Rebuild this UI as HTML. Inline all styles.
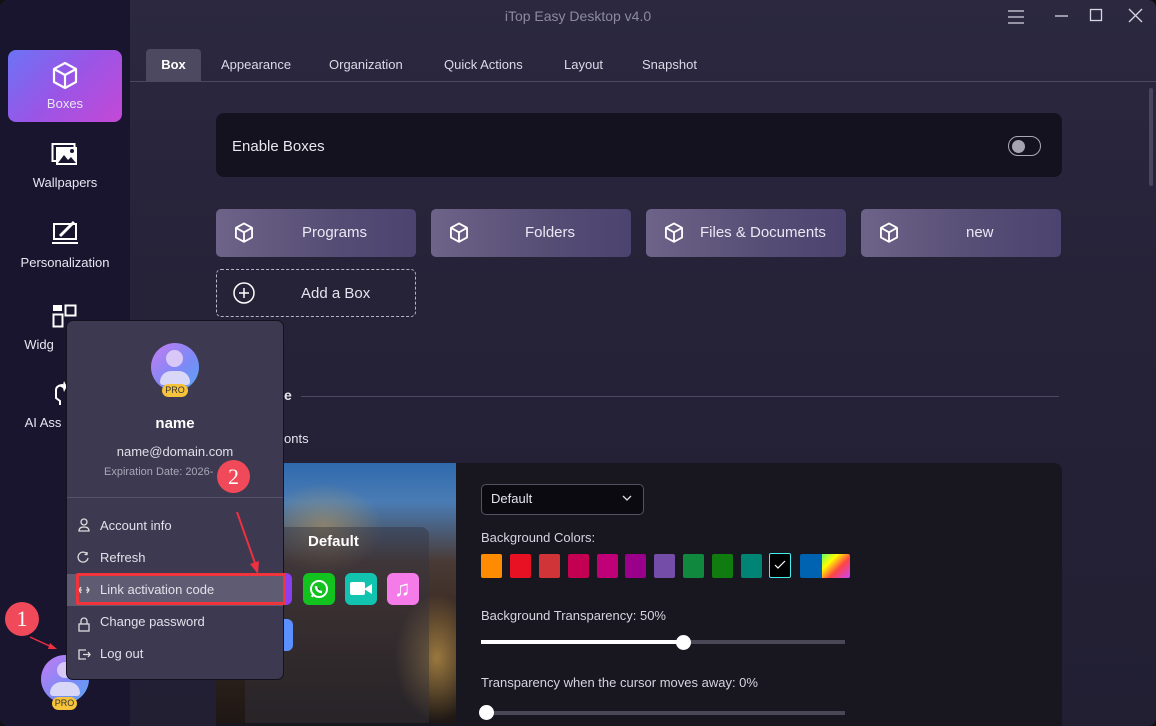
<!DOCTYPE html>
<html><head><meta charset="utf-8"><style>
*{box-sizing:border-box;margin:0;padding:0}
body{width:1156px;height:726px;overflow:hidden;background:#111;font-family:"Liberation Sans",sans-serif;color:#e6e4ee;position:relative}
.win{position:absolute;left:0;top:0;width:1156px;height:726px;border-radius:8px;overflow:hidden;background:linear-gradient(180deg,#2b2840 0%,#262238 40%,#221f33 100%)}
.side{position:absolute;left:0;top:0;width:130px;height:726px;background:#19152f}
.abs{position:absolute}
.nav{position:absolute;left:8px;width:114px;text-align:center;font-size:13px;color:#e8e6f0}
.tab{position:absolute;top:49px;height:32px;line-height:32px;font-size:13px;color:#dcdae6}
.btn{position:absolute;top:209px;width:200px;height:48px;border-radius:5px;background:linear-gradient(90deg,#6e6389,#554d74 60%,#4c4470);font-size:15px;color:#ebe8f4;line-height:48px}
.btn svg{position:absolute;left:17px;top:13px}
.sw{position:absolute;top:554px;width:21px;height:24px;border-radius:2px}
.menu div{position:absolute;left:0;width:218px;height:32px;line-height:32px;padding-left:34px;font-size:13px;color:#e2e0ea}
</style></head><body>
<div class="win">
<div class="side"></div>
<div class="abs" style="left:0;width:1156px;top:8px;text-align:center;font-size:14px;color:#8d8aa0">iTop Easy Desktop v4.0</div>
<svg class="abs" style="left:1005px;top:7px" width="22" height="20"><path d="M3 4h16M3 10h16M3 16h16" stroke="#d8d6e2" stroke-width="1.3"/></svg>
<svg class="abs" style="left:1052px;top:7px" width="22" height="20"><path d="M3 9h13" stroke="#d8d6e2" stroke-width="1.3"/></svg>
<svg class="abs" style="left:1088px;top:7px" width="18" height="18"><rect x="2.5" y="2.5" width="11" height="11" fill="none" stroke="#d8d6e2" stroke-width="1.3"/></svg>
<svg class="abs" style="left:1127px;top:7px" width="18" height="18"><path d="M2 2l13 13M15 2L2 15" stroke="#d8d6e2" stroke-width="1.3"/></svg>
<div class="abs" style="left:8px;top:50px;width:114px;height:72px;border-radius:8px;background:linear-gradient(135deg,#6c73f5,#9a55e6 50%,#c548d6)"></div>
<svg class="abs" style="left:51px;top:61px" width="28" height="30" viewBox="0 0 28 30"><path d="M14 2L25 8v13L14 27 3 21V8z M3 8l11 6 11-6 M14 14v13" fill="none" stroke="#fff" stroke-width="2.2" stroke-linejoin="round"/></svg>
<div class="nav" style="top:96px">Boxes</div>
<svg class="abs" style="left:51px;top:141px" width="28" height="26"><rect x="1.5" y="3" width="22" height="17" fill="none" stroke="#fff" stroke-width="2"/><rect x="5" y="6" width="21" height="18" fill="#fff"/><path d="M7 22l6-8 4 5 3-3 5 6z" fill="#19152f"/><circle cx="21" cy="10" r="2" fill="#19152f"/></svg>
<div class="nav" style="top:175px">Wallpapers</div>
<svg class="abs" style="left:51px;top:220px" width="28" height="26"><rect x="3" y="4" width="22" height="15" fill="none" stroke="#fff" stroke-width="2"/><path d="M1 23h26" stroke="#fff" stroke-width="2"/><path d="M9 16l14-14" stroke="#fff" stroke-width="3"/></svg>
<div class="nav" style="top:255px">Personalization</div>
<svg class="abs" style="left:52px;top:304px" width="26" height="26"><rect x="1" y="1" width="9" height="6" fill="#fff"/><rect x="13.5" y="1.5" width="10" height="10" fill="none" stroke="#fff" stroke-width="2"/><rect x="1.5" y="10.5" width="9" height="12" fill="none" stroke="#fff" stroke-width="2"/></svg>
<div class="nav" style="top:337px;left:-18px">Widg</div>
<svg class="abs" style="left:52px;top:380px" width="24" height="28"><path d="M4 10c0-3 3-5 7-5M4 10v8l4 3v4" fill="none" stroke="#fff" stroke-width="2"/><path d="M12 1l2 4 4 1-4 2-2 4-1-4-4-2 4-1z" fill="#fff"/></svg>
<div class="nav" style="top:415px;left:-14px">AI Ass</div>
<div class="abs" style="left:41px;top:655px;width:48px;height:48px;border-radius:50%;background:linear-gradient(135deg,#c57cf2,#7a8af6 60%,#5aa7f5)"></div>
<div class="abs" style="left:57px;top:662px;width:16px;height:16px;border-radius:50%;background:#d9c8f7"></div>
<div class="abs" style="left:50px;top:682px;width:30px;height:14px;border-radius:15px 15px 4px 4px;background:#d9d7f8"></div>
<div class="abs" style="left:52px;top:697px;width:25px;height:13px;border-radius:7px;background:#f6c33a;color:#333;font-size:9px;text-align:center;line-height:13px">PRO</div>
<div class="abs" style="left:130px;top:81px;width:1026px;height:1px;background:#4b4761"></div>
<div class="tab" style="left:146px;width:55px;background:#4d4961;border-radius:4px 4px 0 0;text-align:center;font-weight:bold;color:#fff">Box</div>
<div class="tab" style="left:221px">Appearance</div>
<div class="tab" style="left:329px">Organization</div>
<div class="tab" style="left:444px">Quick Actions</div>
<div class="tab" style="left:564px">Layout</div>
<div class="tab" style="left:642px">Snapshot</div>
<div class="abs" style="left:1149px;top:88px;width:4px;height:98px;border-radius:2px;background:#4a465c"></div>
<div class="abs" style="left:216px;top:113px;width:846px;height:64px;border-radius:8px;background:#15121f"></div>
<div class="abs" style="left:232px;top:138px;font-size:15px;color:#e8e6ee">Enable Boxes</div>
<div class="abs" style="left:1008px;top:136px;width:33px;height:20px;border-radius:10px;border:1.3px solid #aaa8b6"></div>
<div class="abs" style="left:1012px;top:140px;width:13px;height:13px;border-radius:50%;background:#a6a4b0"></div>
<div class="btn" style="left:216px"><svg width="22" height="22" viewBox="0 0 28 30"><path d="M14 2L25 8v13L14 27 3 21V8z M3 8l11 6 11-6 M14 14v13" fill="none" stroke="#fff" stroke-width="2.5" stroke-linejoin="round"/></svg><span class="abs" style="left:86px">Programs</span></div>
<div class="btn" style="left:431px"><svg width="22" height="22" viewBox="0 0 28 30"><path d="M14 2L25 8v13L14 27 3 21V8z M3 8l11 6 11-6 M14 14v13" fill="none" stroke="#fff" stroke-width="2.5" stroke-linejoin="round"/></svg><span class="abs" style="left:94px">Folders</span></div>
<div class="btn" style="left:646px"><svg width="22" height="22" viewBox="0 0 28 30"><path d="M14 2L25 8v13L14 27 3 21V8z M3 8l11 6 11-6 M14 14v13" fill="none" stroke="#fff" stroke-width="2.5" stroke-linejoin="round"/></svg><span class="abs" style="left:54px">Files &amp; Documents</span></div>
<div class="btn" style="left:861px"><svg width="22" height="22" viewBox="0 0 28 30"><path d="M14 2L25 8v13L14 27 3 21V8z M3 8l11 6 11-6 M14 14v13" fill="none" stroke="#fff" stroke-width="2.5" stroke-linejoin="round"/></svg><span class="abs" style="left:105px">new</span></div>
<div class="abs" style="left:216px;top:269px;width:200px;height:48px;border:1.3px dashed #b7b4c4;border-radius:5px"></div>
<svg class="abs" style="left:233px;top:282px" width="22" height="22"><circle cx="11" cy="11" r="10" fill="none" stroke="#fff" stroke-width="1.5"/><path d="M11 6v10M6 11h10" stroke="#fff" stroke-width="1.5"/></svg>
<div class="abs" style="left:301px;top:285px;font-size:15px">Add a Box</div>
<div class="abs" style="left:284px;top:387px;font-size:14px;font-weight:bold">e</div>
<div class="abs" style="left:301px;top:396px;width:758px;height:1px;background:#4e4a62"></div>
<div class="abs" style="left:284px;top:431px;font-size:13px">onts</div>
<div class="abs" style="left:216px;top:463px;width:846px;height:263px;border-radius:8px 8px 0 0;background:#18161f"></div>
<div class="abs" style="left:216px;top:463px;width:240px;height:260px;background:radial-gradient(ellipse 35% 25% at 45% 25%,rgba(220,170,80,.45),transparent 70%),radial-gradient(ellipse 25% 35% at 92% 75%,rgba(240,190,90,.55),transparent 70%),linear-gradient(180deg,#2f6aae 0%,#4a7cb4 15%,#4a3a35 38%,#3a2a22 60%,#1e1714 100%)"></div>
<div class="abs" style="left:245px;top:527px;width:184px;height:196px;border-radius:8px 8px 0 0;background:rgba(50,50,65,.45)"></div>
<div class="abs" style="left:308px;top:533px;font-size:15px;font-weight:bold;color:#fff">Default</div>
<div class="abs" style="left:270px;top:573px;width:22px;height:32px;border-radius:0 6px 6px 0;background:#8a3ff0"></div>
<div class="abs" style="left:303px;top:573px;width:32px;height:32px;border-radius:6px;background:#12c21e"></div>
<svg class="abs" style="left:307px;top:577px" width="24" height="24"><circle cx="12" cy="12" r="8" fill="none" stroke="#fff" stroke-width="2"/><path d="M5 20l1.5-4" stroke="#fff" stroke-width="2"/><path d="M9 9c0 4 3 6 6 6" stroke="#fff" stroke-width="2.5"/></svg>
<div class="abs" style="left:345px;top:573px;width:32px;height:32px;border-radius:6px;background:#12c4b0"></div>
<div class="abs" style="left:350px;top:582px;width:15px;height:13px;border-radius:2px;background:#fff"></div>
<div class="abs" style="left:364px;top:584px;width:0;height:0;border-right:8px solid #fff;border-top:5px solid transparent;border-bottom:5px solid transparent"></div>
<div class="abs" style="left:387px;top:573px;width:32px;height:32px;border-radius:6px;background:#f47be8"></div>
<div class="abs" style="left:394px;top:576px;font-size:22px;color:#fff">♫</div>
<div class="abs" style="left:284px;top:619px;width:9px;height:32px;border-radius:0 6px 6px 0;background:#5a90ff"></div>
<div class="abs" style="left:481px;top:484px;width:163px;height:31px;border:1px solid #555262;border-radius:5px;background:#0b0a10"></div>
<div class="abs" style="left:491px;top:491px;font-size:13px">Default</div>
<svg class="abs" style="left:622px;top:494px" width="10" height="8"><path d="M1 2l4 4 4-4" fill="none" stroke="#ddd" stroke-width="1.3"/></svg>
<div class="abs" style="left:481px;top:530px;font-size:13px;color:#d6d4de">Background Colors:</div>
<div class="sw" style="left:481px;background:#ff8c00"></div>
<div class="sw" style="left:510px;background:#e81123"></div>
<div class="sw" style="left:539px;background:#d13438"></div>
<div class="sw" style="left:568px;background:#c30052"></div>
<div class="sw" style="left:597px;background:#bf0077"></div>
<div class="sw" style="left:625px;background:#9a0089"></div>
<div class="sw" style="left:654px;background:#744da9"></div>
<div class="sw" style="left:683px;background:#10893e"></div>
<div class="sw" style="left:712px;background:#107c10"></div>
<div class="sw" style="left:741px;background:#008575"></div>
<div class="sw" style="left:769px;width:22px;background:#000;border:1px solid #4ee;top:553px;height:25px"></div>
<svg class="abs" style="left:774px;top:560px" width="12" height="10"><path d="M1 5l3 3 7-7" fill="none" stroke="#fff" stroke-width="1.2"/></svg>
<div class="sw" style="left:800px;width:22px;background:#0063b1;border-radius:2px 0 0 2px"></div>
<div class="sw" style="left:822px;width:28px;background:linear-gradient(135deg,#6f6 0%,#ff0 30%,#f44 60%,#c4f 100%);border-radius:0 2px 2px 0"></div>
<div class="abs" style="left:481px;top:608px;font-size:13px;color:#d6d4de">Background Transparency: 50%</div>
<div class="abs" style="left:481px;top:640px;width:364px;height:4px;background:#4a4756"></div>
<div class="abs" style="left:481px;top:640px;width:200px;height:4px;background:#fff"></div>
<div class="abs" style="left:676px;top:635px;width:15px;height:15px;border-radius:50%;background:#fff"></div>
<div class="abs" style="left:481px;top:675px;font-size:13px;color:#d6d4de">Transparency when the cursor moves away: 0%</div>
<div class="abs" style="left:481px;top:711px;width:364px;height:4px;background:#4a4756"></div>
<div class="abs" style="left:479px;top:705px;width:15px;height:15px;border-radius:50%;background:#fff"></div>
<div class="abs" style="left:66px;top:320px;width:218px;height:360px;border-radius:7px;background:#3c3950;border:1px solid #14121c"></div>
<div class="abs" style="left:151px;top:343px;width:48px;height:48px;border-radius:50%;background:linear-gradient(135deg,#c57cf2,#7a8af6 60%,#5aa7f5)"></div>
<div class="abs" style="left:166px;top:350px;width:17px;height:17px;border-radius:50%;background:#d9c8f7"></div>
<div class="abs" style="left:160px;top:371px;width:30px;height:14px;border-radius:15px 15px 4px 4px;background:#d9d7f8"></div>
<div class="abs" style="left:162px;top:384px;width:26px;height:13px;border-radius:7px;background:#f6c33a;color:#333;font-size:9px;text-align:center;line-height:13px">PRO</div>
<div class="abs" style="left:66px;top:415px;width:218px;text-align:center;font-size:15px;font-weight:bold;color:#fff">name</div>
<div class="abs" style="left:66px;top:444px;width:218px;text-align:center;font-size:13px;color:#e0dee8">name@domain.com</div>
<div class="abs" style="left:104px;top:466px;font-size:11px;color:#a9a6b8">Expiration Date: 2026-</div>
<div class="abs" style="left:67px;top:497px;width:216px;height:1px;background:#55526a"></div>
<div class="abs" style="left:67px;top:574px;width:216px;height:32px;background:#5f5b72"></div>
<div class="menu" style="position:absolute;left:66px;top:510px">
<div style="top:0">Account info</div>
<div style="top:32px">Refresh</div>
<div style="top:64px">Link activation code</div>
<div style="top:96px">Change password</div>
<div style="top:128px">Log out</div>
</div>
<svg class="abs" style="left:77px;top:518px" width="14" height="150" fill="none" stroke="#ddd" stroke-width="1.3">
<circle cx="7" cy="4" r="3"/><path d="M2 13c0-3 2-4 5-4s5 1 5 4z"/>
<path d="M12 40a5 5 0 1 1-1-4M11 34v2.5h-2.5" transform="translate(-1,0)"/>
<path d="M2 72h3M9 72h3M4 69l-2 3 2 3M10 69l2 3-2 3" />
<rect x="2" y="106" width="10" height="7"/><path d="M4 106v-3a3 3 0 0 1 6 0v3"/>
<path d="M9 132H2v9h7M6 136.5h7M11 134l2 2.5-2 2.5"/>
</svg>
<div class="abs" style="left:76px;top:573px;width:210px;height:32px;border:3px solid #f0343c;border-radius:2px"></div>
<svg class="abs" style="left:0;top:0" width="300" height="726"><path d="M237 512L256 566" stroke="#ee3040" stroke-width="2"/><path d="M250 564l8 10 1-13z" fill="#ee3040"/><path d="M30 637L54 648" stroke="#ee3040" stroke-width="1.5"/><path d="M50 643l7 6-9 0z" fill="#ee3040"/></svg>
<div class="abs" style="left:217px;top:460px;width:33px;height:33px;border-radius:50%;background:#f04a5a;color:#fff;font-family:'Liberation Serif',serif;font-size:22px;text-align:center;line-height:33px">2</div>
<div class="abs" style="left:5px;top:602px;width:34px;height:34px;border-radius:50%;background:#f04a5a;color:#fff;font-family:'Liberation Serif',serif;font-size:22px;text-align:center;line-height:34px">1</div>
</div>
</body></html>
